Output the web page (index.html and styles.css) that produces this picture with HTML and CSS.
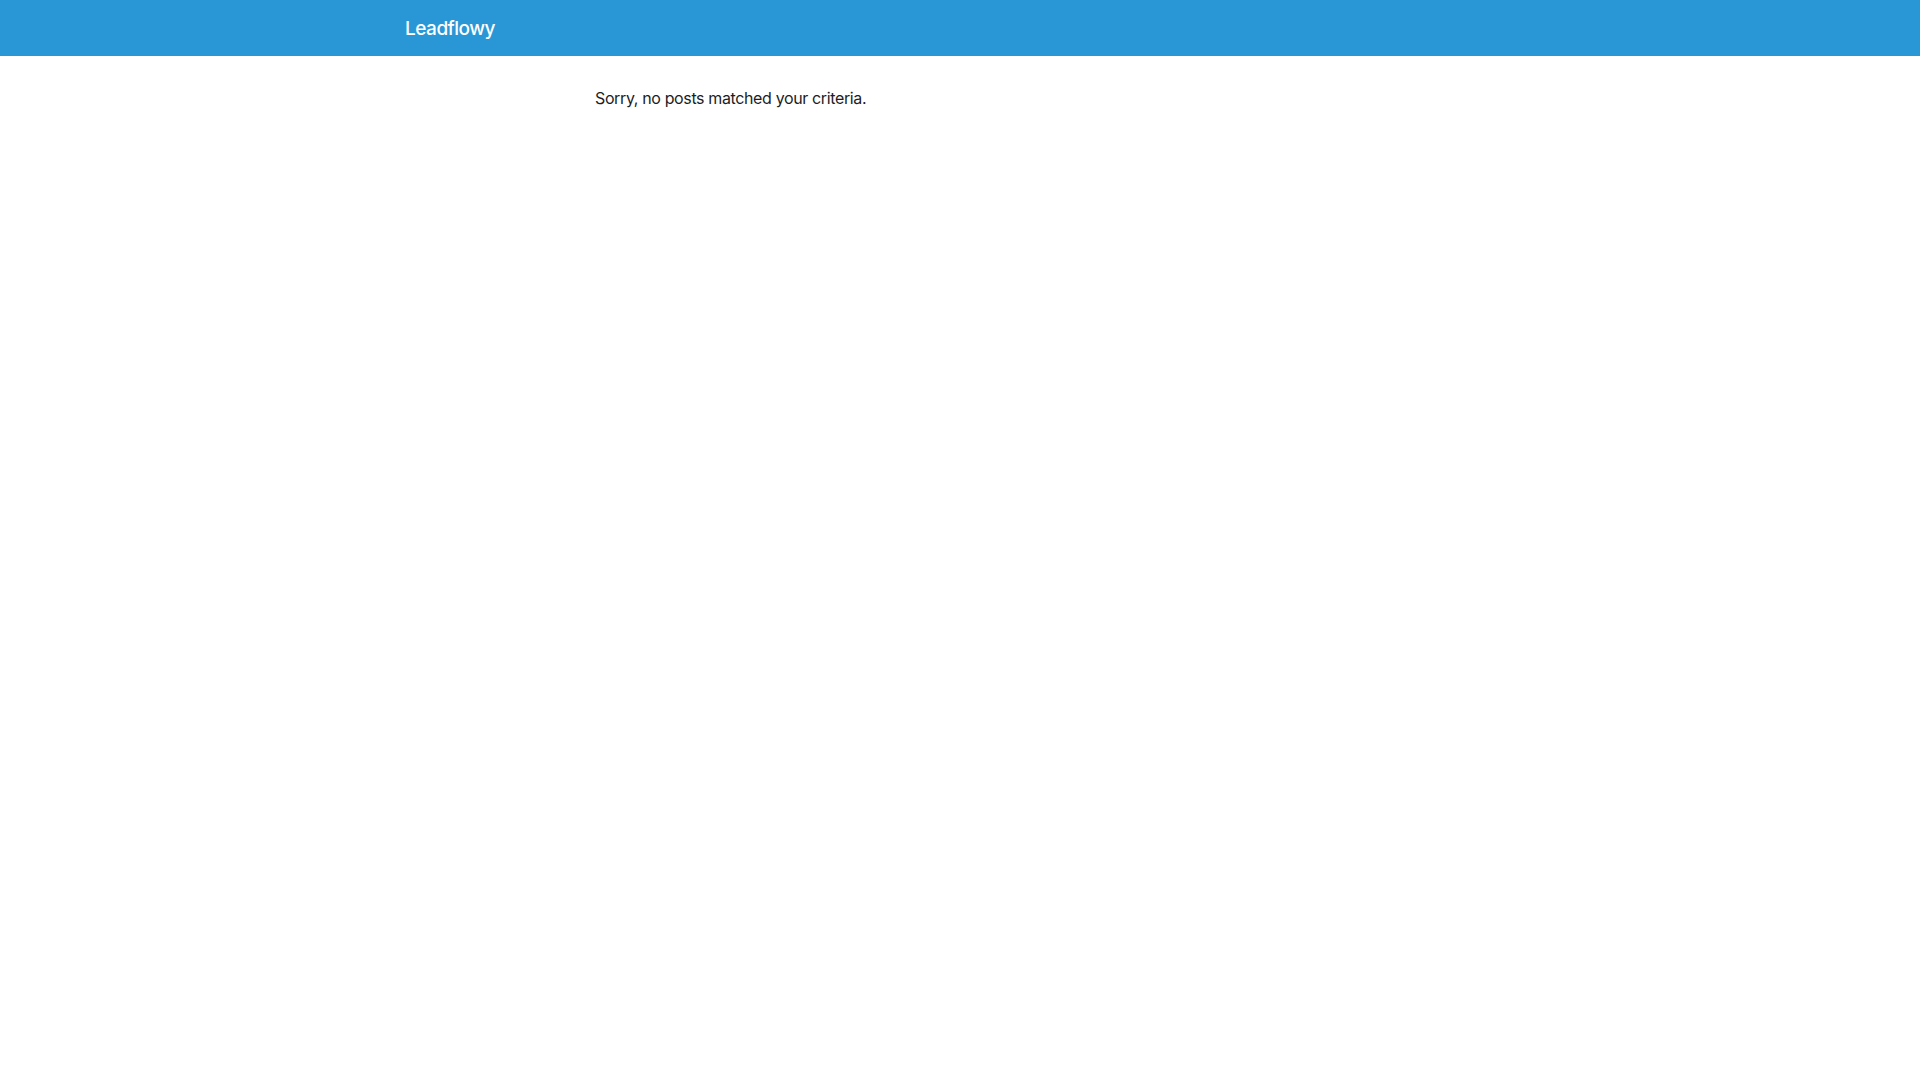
FILE: index.html
```html
<!DOCTYPE html>
<html lang="en">
<head>
    <meta charset="UTF-8">
    <meta name="viewport" content="width=device-width, initial-scale=1.0">
    <title>Leadflowy</title>
    <link rel="stylesheet" href="styles.css">
</head>
<body>
    <header class="site-header">
        <div class="header-inner">
            <a class="site-title" href="#">Leadflowy</a>
        </div>
    </header>

    <main class="site-main">
        <p class="no-posts">Sorry, no posts matched your criteria.</p>
    </main>
</body>
</html>
```

FILE: styles.css
```css
* {
    margin: 0;
    padding: 0;
    box-sizing: border-box;
}

body {
    font-family: Inter, "Noto Sans", sans-serif;
    background-color: #fff;
    color: #1d1d1f;
}

.site-header {
    background-color: #2997d6;
    height: 56px;
}

.header-inner {
    display: flex;
    align-items: center;
    height: 100%;
    padding-left: 405px;
}

.site-title {
    color: #fff;
    font-size: 19px;
    font-weight: 500;
    letter-spacing: -0.5px;
    text-decoration: none;
}

.site-main {
    padding: 30px 0 0 595px;
}

.no-posts {
    font-size: 16px;
    line-height: 24px;
    letter-spacing: -0.37px;
}
```
